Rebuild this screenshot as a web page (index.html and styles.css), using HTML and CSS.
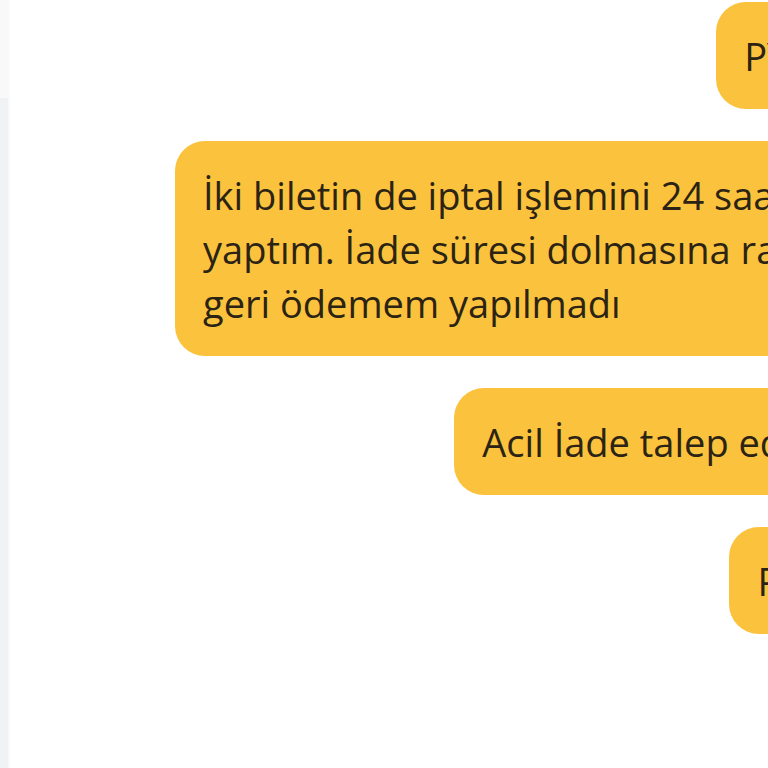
FILE: index.html
```html
<!DOCTYPE html>
<html>
<head>
    <title>Destek Talebi</title>
    <link rel="stylesheet" href="styles.css">
</head>
<body>
    <div class="page">
        <aside class="sidebar">
            <div class="sidebar-top"></div>
            <div class="sidebar-list"></div>
        </aside>
        <main class="chat">
            <div class="message">PYK7RT2M4Z</div>
            <div class="message">İki biletin de iptal işlemini 24 saat önceden yaptım. İade süresi dolmasına rağmen hâlâ geri ödemem yapılmadı</div>
            <div class="message">Acil İade talep ediyorum acil</div>
            <div class="message">PNR7K2M4X</div>
        </main>
    </div>
</body>
</html>
```

FILE: styles.css
```css
html, body {
    margin: 0;
    padding: 0;
    height: 100%;
    overflow: hidden;
    background-color: #fff;
}
body {
    font-family: "Open Sans", "Noto Sans", sans-serif;
    color: #2b2414;
}
.page {
    display: flex;
    height: 100%;
}
.sidebar {
    width: 10px;
    flex-shrink: 0;
    display: flex;
    flex-direction: column;
}
.sidebar-top {
    height: 98px;
    background-color: #f9f9fa;
    border-right: 2px solid #fbfbfc;
}
.sidebar-list {
    flex: 1;
    background-color: #f1f2f4;
    border-right: 2px solid #f8f9fa;
}
.chat {
    width: 995px;
    flex-shrink: 0;
    display: flex;
    flex-direction: column;
    align-items: flex-end;
    gap: 32px;
    padding-top: 2px;
}
.message {
    box-sizing: border-box;
    max-width: 830px;
    padding: 26.5px 28px;
    background-color: #fbc23d;
    border-radius: 30px;
    font-size: 38px;
    line-height: 54px;
}
```
